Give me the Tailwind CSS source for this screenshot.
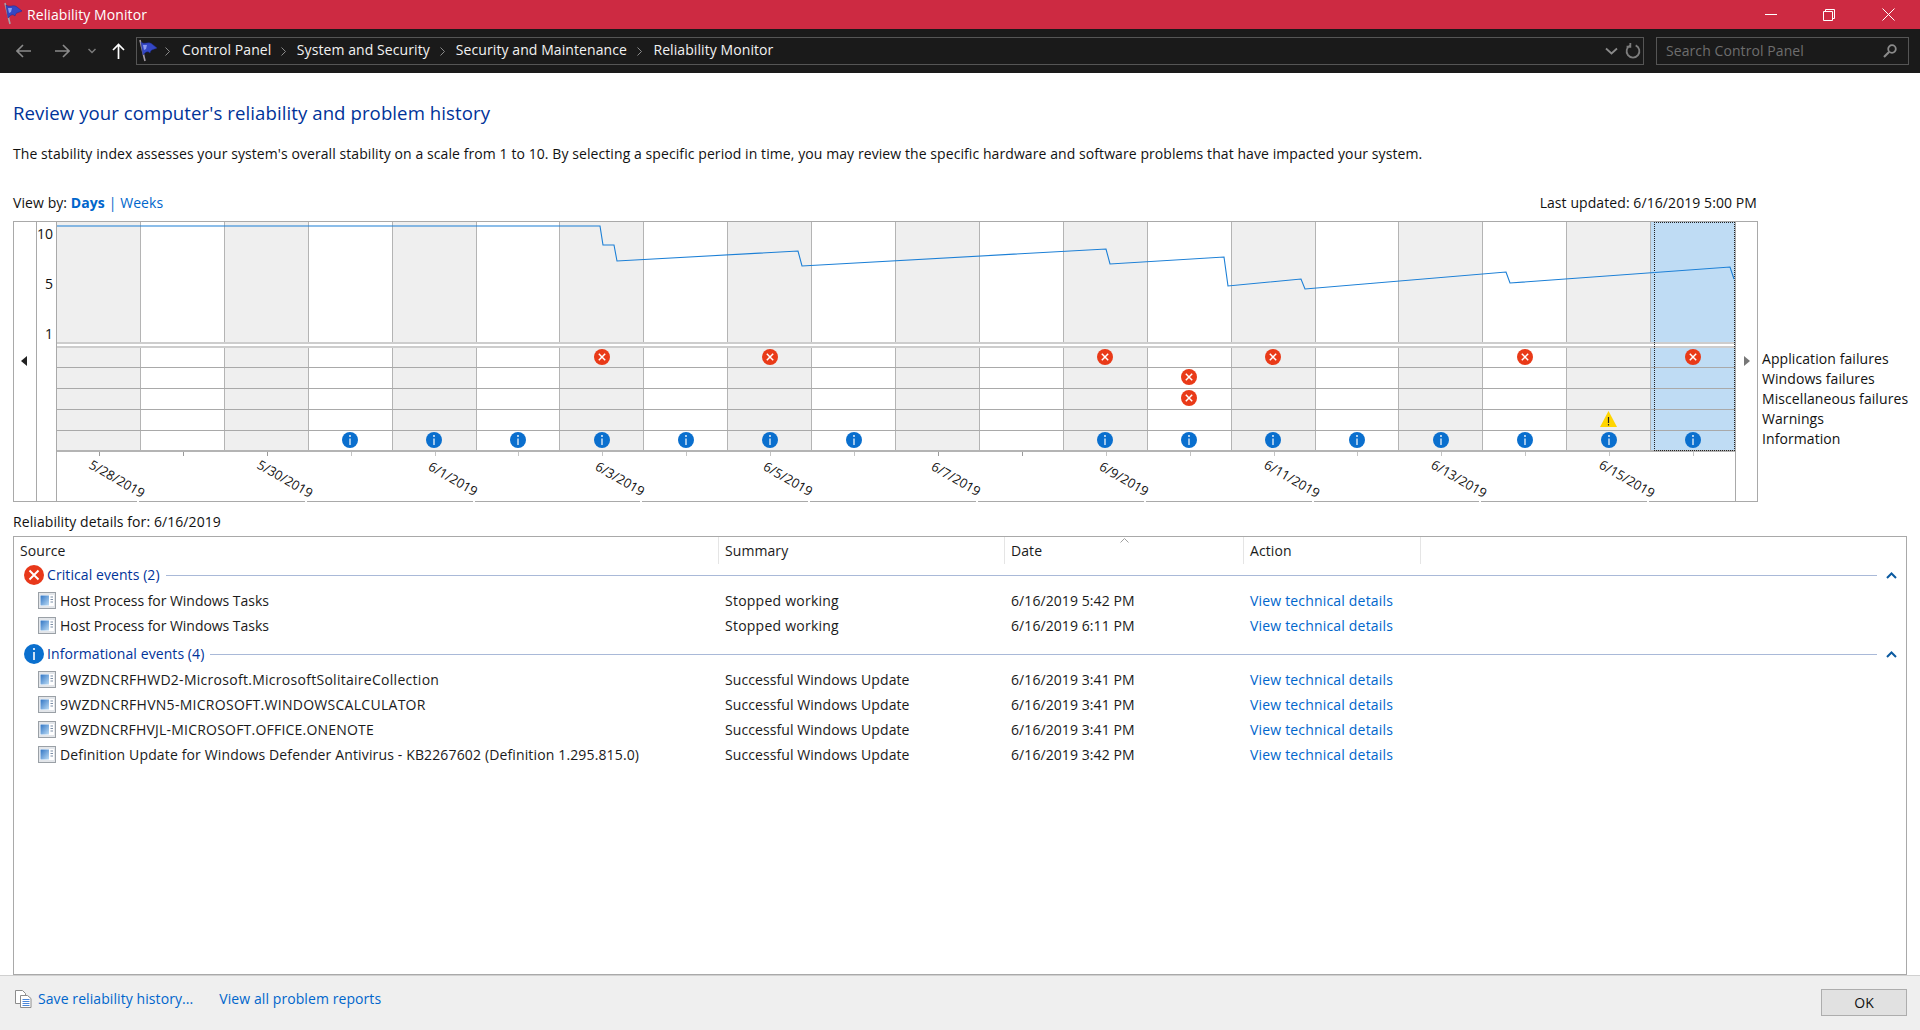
<!DOCTYPE html>
<html lang="en">
<head>
  <meta charset="UTF-8" />
  <title>Reliability Monitor</title>
  <script src="https://cdn.jsdelivr.net/npm/@tailwindcss/browser@4"></script>
</head>
<body class="bg-white font-['Open_Sans',sans-serif] text-[14px] tracking-[0.08px] leading-none text-[#111] overflow-hidden">
<div class="flex flex-col h-[1030px] w-[1920px]">

  <!-- title bar -->
  <div class="h-[29px] shrink-0 bg-[#cd2a42] flex items-center text-white">
    <svg class="ml-[2px] mt-[-2px] w-[21px] h-[24px]" viewBox="0 0 21 24">
      <path d="M3 1 L8 22" stroke="#a9a0a8" stroke-width="1.6"/>
      <path d="M4 3 C8 6 11 2 15 5 L20 9 C16 11 14 10 13 14 C10 11 8 14 6 16 Z" fill="#3447c4" stroke="#1f2a8c" stroke-width=".5"/>
      <path d="M6 6 L10 6 L9 10 L7 11Z" fill="#8d9bf0"/>
    </svg>
    <span class="ml-[4px]">Reliability Monitor</span>
    <div class="ml-auto flex items-center">
      <svg class="w-[12px] h-[12px] mr-[46px]" viewBox="0 0 12 12"><path d="M0 5.5H12" stroke="#fff"/></svg>
      <svg class="w-[12px] h-[12px] mr-[47px]" viewBox="0 0 12 12" fill="none" stroke="#fff"><path d="M.5 2.5h9v9h-9zM2.5 2.5v-2h9v9h-2"/></svg>
      <svg class="w-[13px] h-[13px] mr-[25px]" viewBox="0 0 13 13" stroke="#fff"><path d="M.5.5l12 12M12.5.5l-12 12"/></svg>
    </div>
  </div>

  <!-- address bar -->
  <div class="h-[44px] shrink-0 bg-[#1a1a1a] flex items-center">
    <svg class="ml-[16px] w-[15px] h-[14px]" viewBox="0 0 15 14" fill="none" stroke="#8a8a8a" stroke-width="1.6"><path d="M15 7H1M7 1L1 7l6 6"/></svg>
    <svg class="ml-[24px] w-[15px] h-[14px]" viewBox="0 0 15 14" fill="none" stroke="#8a8a8a" stroke-width="1.6"><path d="M0 7h14M8 1l6 6-6 6"/></svg>
    <svg class="ml-[18px] w-[8px] h-[6px]" viewBox="0 0 8 6" fill="none" stroke="#7c7c7c" stroke-width="1.5"><path d="M.5 1L4 4.5 7.5 1"/></svg>
    <svg class="ml-[16px] w-[13px] h-[16px]" viewBox="0 0 13 16" fill="none" stroke="#fff" stroke-width="1.7"><path d="M6.5 16V1.5M1 7l5.5-5.5L12 7"/></svg>
    <div class="ml-[11px] w-[1508px] h-[28px] border border-[#555] flex items-center text-[#f2f2f2]">
      <svg class="w-[21px] h-[24px]" viewBox="0 0 21 24">
        <path d="M3 1 L8 22" stroke="#a9a0a8" stroke-width="1.6"/>
        <path d="M4 3 C8 6 11 2 15 5 L20 9 C16 11 14 10 13 14 C10 11 8 14 6 16 Z" fill="#3447c4" stroke="#1f2a8c" stroke-width=".5"/>
        <path d="M6 6 L10 6 L9 10 L7 11Z" fill="#8d9bf0"/>
      </svg>
      <svg class="ml-[7px] w-[5px] h-[9px]" viewBox="0 0 5 9" fill="none" stroke="#8a8a8a"><path d="M.5.5l4 4-4 4"/></svg>
      <span class="ml-[12px] mt-[-2px]">Control Panel</span>
      <svg class="ml-[10px] w-[5px] h-[9px]" viewBox="0 0 5 9" fill="none" stroke="#8a8a8a"><path d="M.5.5l4 4-4 4"/></svg>
      <span class="ml-[10.5px] mt-[-2px]">System and Security</span>
      <svg class="ml-[10.5px] w-[5px] h-[9px]" viewBox="0 0 5 9" fill="none" stroke="#8a8a8a"><path d="M.5.5l4 4-4 4"/></svg>
      <span class="ml-[10.5px] mt-[-2px]">Security and Maintenance</span>
      <svg class="ml-[10.5px] w-[5px] h-[9px]" viewBox="0 0 5 9" fill="none" stroke="#8a8a8a"><path d="M.5.5l4 4-4 4"/></svg>
      <span class="ml-[11px] mt-[-2px]">Reliability Monitor</span>
      <svg class="ml-auto mr-[7px] w-[13px] h-[8px]" viewBox="0 0 13 8" fill="none" stroke="#8a8a8a" stroke-width="1.8"><path d="M1 1.5l5.5 5 5.5-5"/></svg>
      <svg class="mr-[2px] w-[16px] h-[16px]" viewBox="0 0 15 15" fill="none" stroke="#7d7d7d" stroke-width="1.7"><path d="M5 2.2A6 6 0 1 0 10 2.2M5 0v3.5H1.5"/></svg>
    </div>
    <div class="ml-[12px] w-[253px] h-[28px] border border-[#555] flex items-center text-[#6e6e6e]">
      <span class="ml-[9px]">Search Control Panel</span>
      <svg class="ml-auto mr-[11px] w-[14px] h-[14px]" viewBox="0 0 14 14" fill="none" stroke="#8a8a8a" stroke-width="1.8"><circle cx="9" cy="5" r="3.8"/><path d="M6 8l-5 5" stroke-width="2.2"/></svg>
    </div>
  </div>

  <!-- intro -->
  <h1 class="mt-[29px] ml-[13px] h-[22px] text-[18.6px] leading-[22px] text-[#003399]">Review your computer's reliability and problem history</h1>
  <p class="mt-[21px] ml-[13px] h-[18px] leading-[18px]">The stability index assesses your system's overall stability on a scale from 1 to 10. By selecting a specific period in time, you may review the specific hardware and software problems that have impacted your system.</p>
  <div class="mt-[31px] ml-[13px] w-[1744px] h-[18px] leading-[18px] flex justify-between">
    <span>View by: <b class="text-[#0066cc] font-bold">Days</b> <span class="text-[#0066cc]">|</span> <span class="text-[#0066cc]">Weeks</span></span>
    <span>Last updated: 6/16/2019 5:00 PM</span>
  </div>

  <!-- chart -->
  <div class="mt-[9px] ml-[13px] flex items-start">
    <div class="w-[1745px] h-[281px] border border-[#a9a9a9] flex">
      <div class="w-[22px] shrink-0 pl-[7px] pt-[134px]">
        <svg class="w-[6px] h-[10px]" viewBox="0 0 6 10"><path d="M6 0v10L0 5z" fill="#222"/></svg>
      </div>
      <div class="relative w-[20px] shrink-0 border-l border-[#a9a9a9] text-right pr-[3px] pt-[4px]">
        <div class="h-[50px] leading-[16px]">10</div>
        <div class="h-[50px] leading-[16px]">5</div>
        <div class="leading-[16px]">1</div>
      </div>
      <div id="plot" class="relative w-[1680px] shrink-0 border-x border-[#a9a9a9] flex flex-col"></div>
      <div class="flex-1 pl-[8px] pt-[134px]">
        <svg class="w-[6px] h-[10px]" viewBox="0 0 6 10"><path d="M0 0v10l6-5z" fill="#777"/></svg>
      </div>
    </div>
    <div class="ml-[4px] mt-[128px] text-[#111] leading-[20px]">
      <div>Application failures</div>
      <div>Windows failures</div>
      <div>Miscellaneous failures</div>
      <div>Warnings</div>
      <div>Information</div>
    </div>
  </div>

  <!-- details -->
  <div class="mt-[9.5px] ml-[13px] h-[20px] leading-[20px]">Reliability details for: 6/16/2019</div>
  <div class="relative ml-[13px] mt-[4.5px] w-[1894px] flex-1 border border-[#a9a9a9] text-[#1a1a1a]">
    <div class="relative h-[27px] flex items-center">
      <div class="w-[705px] h-full pl-[6px] flex items-center border-r border-[#e5e5e5]">Source</div>
      <div class="w-[286px] h-full pl-[6px] flex items-center border-r border-[#e5e5e5]">Summary</div>
      <div class="w-[239px] h-full pl-[6px] flex items-center border-r border-[#e5e5e5]">Date</div>
      <div class="w-[177px] h-full pl-[6px] flex items-center border-r border-[#e5e5e5]">Action</div>
      <svg class="absolute left-[1106px] top-[1px] w-[9px] h-[5px]" viewBox="0 0 9 5" fill="none" stroke="#a0a0a0"><path d="M.5 4.5l4-4 4 4"/></svg>
    </div>
    <div id="rows"></div>
  </div>

  <!-- footer -->
  <div class="h-[55px] shrink-0 bg-[#efefef] border-t border-[#d0d0d0] flex items-start">
    <svg class="ml-[15px] mt-[14px] w-[17px] h-[18px]" viewBox="0 0 17 18" fill="#fff" stroke="#8c8c8c">
      <path d="M.5.5h7l3 3v10H.5z"/><path d="M5.5 5.5h7l3.5 3v9H5.5z"/>
      <path d="M7.5 9.5h7M7.5 11.5h7M7.5 13.5h7M7.5 15.5h7" stroke="#4a86d8"/>
    </svg>
    <a class="ml-[6px] mt-[14px] leading-[18px] text-[#0066cc]">Save reliability history...</a>
    <a class="ml-[26px] mt-[14px] leading-[18px] text-[#0066cc]">View all problem reports</a>
    <button class="ml-auto mr-[13px] mt-[13px] w-[86px] h-[27px] bg-[#e1e1e1] border border-[#adadad] text-[#111] text-[14px]">OK</button>
  </div>
</div>

<script>
  const errorIcon = `<svg class="w-[16px] h-[16px]" viewBox="0 0 16 16"><circle cx="8" cy="8" r="8" fill="#e93a18"/><path d="M4.8 4.8l6.4 6.4M11.2 4.8l-6.4 6.4" stroke="#fff" stroke-width="1.5"/></svg>`;
  const infoIcon = `<svg class="w-[16px] h-[16px]" viewBox="0 0 16 16"><circle cx="8" cy="8" r="8" fill="#0a6fce"/><path d="M8 6.5V13" stroke="#fff" stroke-width="1.2"/><circle cx="8" cy="4" r=".9" fill="#fff"/></svg>`;
  const warnIcon = `<svg class="w-[17px] h-[16px]" viewBox="0 0 17 16"><path d="M8.5 0L17 16H0z" fill="#ffd500"/><path d="M8.5 6v6M8.5 13v1.5" stroke="#222" stroke-width="1.2"/></svg>`;

  // stability line, x measured from 56 and y from the top of the window
  const linePoints = [[0,226],[544,226],[547,245],[558,245],[561,261],[742,251],[746,266],[1050,249],[1054,264],[1168,257],[1172,286],[1245,279],[1249,289],[1450,272],[1454,283],[1674,267],[1678,279]]
    .map(p => (p[0] - 1) + ',' + (p[1] - 222)).join(' ');

  const marks = [
    {6:'e',8:'e',12:'e',14:'e',17:'e',19:'e'},
    {13:'e'},
    {13:'e'},
    {18:'w'},
    {3:'i',4:'i',5:'i',6:'i',7:'i',8:'i',9:'i',12:'i',13:'i',14:'i',15:'i',16:'i',17:'i',18:'i',19:'i'}
  ];
  const dates = ['5/28/2019','','5/30/2019','','6/1/2019','','6/3/2019','','6/5/2019','','6/7/2019','','6/9/2019','','6/11/2019','','6/13/2019','','6/15/2019',''];

  function cell(i, inner) {
    const bg = i === 19 ? 'bg-[#bfdcf4]' : (i % 2 === 0 ? 'bg-[#efefef]' : 'bg-white');
    const line = i === 19 ? '' : 'border-r border-[#b4b4b4]';
    return `<div class="${bg} ${line} flex items-center justify-center min-w-0">${inner || ''}</div>`;
  }

  let html = '<div class="h-[122px] grid grid-cols-20 border-b-2 border-[#cdcdcd]">';
  for (let i = 0; i < 20; i++) html += cell(i);
  html += '</div><div class="h-[2px] bg-white"></div>';

  const rowClass = [
    'h-[22px] border-t-2 border-b border-t-[#cdcdcd] border-b-[#a9a9a9]',
    'h-[21px] border-b border-[#a9a9a9]',
    'h-[21px] border-b border-[#a9a9a9]',
    'h-[21px] border-b border-[#a9a9a9]',
    'h-[21px] border-b-2 border-[#b4b4b4]'
  ];
  marks.forEach((row, r) => {
    html += `<div class="${rowClass[r]} grid grid-cols-20">`;
    for (let i = 0; i < 20; i++) {
      const icon = row[i] === 'e' ? errorIcon : row[i] === 'i' ? infoIcon : row[i] === 'w' ? warnIcon : '';
      html += cell(i, icon ? `<span class="relative -top-px">${icon}</span>` : '');
    }
    html += '</div>';
  });

  // date axis
  html += '<div class="relative flex-1 grid grid-cols-20">';
  dates.forEach((d, i) => {
    html += `<div class="relative"><div class="absolute left-1/2 top-0 w-px h-[4px] ${marks[4][i] ? 'bg-[#c4c4c4]' : 'bg-[#9a9a9a]'}"></div>`;
    if (d) {
      html += `<span class="absolute left-[60px] top-[27px] -translate-x-1/2 -translate-y-1/2 rotate-[30deg] whitespace-nowrap text-[13px] tracking-normal text-[#111]">${d}</span>`;
      html += `<div class="absolute left-[80px] -bottom-px w-[2px] h-px bg-white"></div>`;
    }
    html += '</div>';
  });
  html += '</div>';

  // selected day and line go over the grid
  html += `<div class="absolute top-0 right-0 w-[81px] h-[229px] border border-dotted border-[#222]"></div>`;
  html += `<svg class="absolute left-0 top-0 w-[1678px] h-[122px]" viewBox="0 0 1678 122" fill="none"><polyline points="${linePoints}" stroke="#1b7fd6" stroke-width="1.1"/></svg>`;
  document.getElementById('plot').innerHTML = html;

  // event list
  const rowIcon = `<svg class="w-[18px] h-[17px] shrink-0" viewBox="0 0 18 17"><defs><linearGradient id="pane" x1="0" y1="0" x2="1" y2="1"><stop offset="0" stop-color="#2f74c4"/><stop offset="1" stop-color="#bcdcf5"/></linearGradient></defs><rect x=".5" y=".5" width="17" height="16" fill="#e3e6ea" stroke="#9aa0a6"/><rect x="2" y="3" width="14" height="11" fill="#fff"/><rect x="2.5" y="3.5" width="8.5" height="10" fill="url(#pane)"/><path d="M12.5 5h2.5M12.5 7.5h2.5M12.5 10h2.5" stroke="#7a8da5"/></svg>`;
  const groupIcons = {
    critical: `<svg class="w-[20px] h-[20px] shrink-0" viewBox="0 0 20 20"><circle cx="10" cy="10" r="10" fill="#e8381a"/><path d="M5.5 5.5l9 9M14.5 5.5l-9 9" stroke="#fff" stroke-width="1.9"/></svg>`,
    info: `<svg class="w-[20px] h-[20px] shrink-0" viewBox="0 0 20 20"><circle cx="10" cy="10" r="10" fill="#0a6fce"/><path d="M10 8v8" stroke="#fff" stroke-width="1.6"/><circle cx="10" cy="5" r="1.1" fill="#fff"/></svg>`
  };
  const groups = [
    { icon: 'critical', title: 'Critical events (2)', top: 'mb-[2px]', items: [
      ['Host Process for Windows Tasks', 'Stopped working', '6/16/2019 5:42 PM', 'tracking-[-0.04px]', 'tracking-[0.24px]'],
      ['Host Process for Windows Tasks', 'Stopped working', '6/16/2019 6:11 PM', 'tracking-[-0.04px]', 'tracking-[0.24px]']
    ]},
    { icon: 'info', title: 'Informational events (4)', top: 'mt-[5px] mb-[2px]', items: [
      ['9WZDNCRFHWD2-Microsoft.MicrosoftSolitaireCollection', 'Successful Windows Update', '6/16/2019 3:41 PM', 'tracking-[0.28px]', ''],
      ['9WZDNCRFHVN5-MICROSOFT.WINDOWSCALCULATOR', 'Successful Windows Update', '6/16/2019 3:41 PM', 'tracking-[0.28px]', ''],
      ['9WZDNCRFHVJL-MICROSOFT.OFFICE.ONENOTE', 'Successful Windows Update', '6/16/2019 3:41 PM', 'tracking-[0.21px]', ''],
      ['Definition Update for Windows Defender Antivirus - KB2267602 (Definition 1.295.815.0)', 'Successful Windows Update', '6/16/2019 3:42 PM', 'tracking-[0.14px]', '']
    ]}
  ];
  document.getElementById('rows').innerHTML = groups.map(g => `
    <div class="${g.top} h-[22px] flex items-center pl-[10px] pr-[9px]">
      ${groupIcons[g.icon]}
      <span class="ml-[3px] text-[#003399] whitespace-nowrap">${g.title}</span>
      <div class="flex-1 h-px bg-[#a9b9d8] mx-[6px]"></div>
      <svg class="ml-[3px] w-[11px] h-[7px]" viewBox="0 0 11 7" fill="none" stroke="#0b5aa0" stroke-width="2"><path d="M1 6l4.5-4.5L10 6"/></svg>
    </div>
    ${g.items.map(it => `
    <div class="h-[25px] grid grid-cols-[711px_286px_239px_1fr] items-center">
      <div class="flex items-center pl-[24px] whitespace-nowrap">${rowIcon}<span class="ml-[4px] ${it[3]}">${it[0]}</span></div>
      <div class="${it[4]}">${it[1]}</div>
      <div>${it[2]}</div>
      <div class="text-[#0066cc] tracking-[0.18px]">View technical details</div>
    </div>`).join('')}`).join('');
</script>
</body>
</html>
